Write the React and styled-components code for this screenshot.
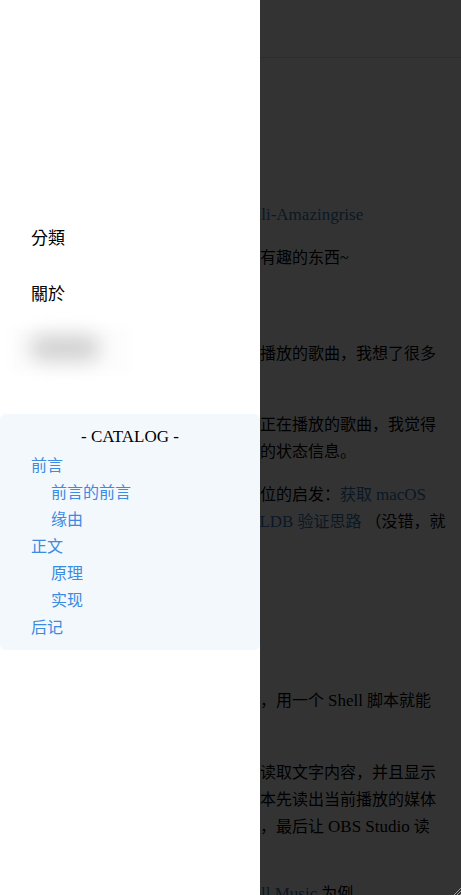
import styled, { createGlobalStyle } from "styled-components";

const GlobalStyle = createGlobalStyle`
  html, body {
    margin: 0;
    padding: 0;
    background: #fff;
    overflow: hidden;
  }
  body {
    font-family: "Liberation Serif", "Noto Sans CJK SC", serif;
  }
`;

const Page = styled.div`
  position: relative;
  width: 461px;
  height: 895px;
  overflow: hidden;
  background: #fff;
`;

const NavBar = styled.div`
  height: 57px;
  background: #fff;
  border-bottom: 1px solid #e2e2e2;
`;

const Article = styled.div`
  padding-left: 244px;
  padding-top: 143px;
  font-size: 16px;
  line-height: 27px;
  color: #000;
  font-family: "Liberation Serif", "Noto Sans CJK SC", serif;
`;

const Line = styled.div`
  white-space: nowrap;
  margin-top: ${(p) => p.$gap || 0}px;
  margin-left: ${(p) => p.$shift || 0}px;
`;

const Latin = styled.span`
  font-family: "Liberation Serif", serif;
  font-size: 17px;
`;

const A = styled.span`
  color: #337ab7;
`;

const Overlay = styled.div`
  position: absolute;
  inset: 0;
  background: rgba(0, 0, 0, 0.8);
`;

const Grip = styled.svg`
  position: absolute;
  right: 0;
  bottom: 0;
`;

const Sidebar = styled.aside`
  position: absolute;
  top: 0;
  left: 0;
  bottom: 0;
  width: 260px;
  background: #fff;
  padding-top: 209px;
  box-sizing: border-box;
`;

const NavItem = styled.div`
  padding-left: 31px;
  font-size: 17px;
  line-height: 56px;
  color: #000;
  font-family: "Noto Sans CJK TC", sans-serif;
`;

const BlurWrap = styled.div`
  height: 54px;
  position: relative;
  margin-left: 10px;
  width: 120px;
`;

const Haze = styled.div`
  position: absolute;
  inset: 6px 0 2px 0;
  background: rgba(0, 0, 0, 0.007);
  filter: blur(4px);
`;

const Blob = styled.div`
  position: absolute;
  left: 20px;
  top: 15px;
  width: 70px;
  height: 24px;
  border-radius: 12px;
  background: #cdcdcd;
  filter: blur(10px);
`;

const Catalog = styled.div`
  margin-top: 39px;
  background: #f3f8fc;
  border-radius: 6px;
  padding: 12px 0 10px;
`;

const CatalogTitle = styled.div`
  text-align: center;
  font-size: 17px;
  line-height: 22px;
  margin-bottom: 3px;
  color: #000;
  font-family: "Liberation Serif", serif;
`;

const CatalogItem = styled.div`
  padding-left: ${(p) => (p.$sub ? 51 : 31)}px;
  font-size: 16px;
  line-height: 27px;
  color: #3d8ae2;
  font-family: "Noto Sans CJK SC", sans-serif;
`;

const catalog = [
  { t: "前言" },
  { t: "前言的前言", sub: true },
  { t: "缘由", sub: true },
  { t: "正文" },
  { t: "原理", sub: true },
  { t: "实现", sub: true },
  { t: "后记" },
];

export default function App() {
  return (
    <Page>
      <GlobalStyle />
      <NavBar />
      <Article>
        <Line $shift={4}>
          <A>
            <Latin>bili-Amazingrise</Latin>
          </A>
        </Line>
        <Line $gap={16}>有有趣的东西~</Line>
        <Line $gap={69}>正播放的歌曲，我想了很多</Line>
        <Line $gap={44}>示正在播放的歌曲，我觉得</Line>
        <Line>体的状态信息。</Line>
        <Line $gap={16}>
          单位的启发：<A>获取 <Latin>macOS</Latin></A>
        </Line>
        <Line $shift={5}>
          <A>
            <Latin>LLDB</Latin> 验证思路
          </A>{" "}
          （没错，就
        </Line>
        <Line $gap={152}>
          单，用一个 <Latin>Shell</Latin> 脚本就能
        </Line>
        <Line $gap={45}>，读取文字内容，并且显示</Line>
        <Line>脚本先读出当前播放的媒体</Line>
        <Line>
          中，最后让 <Latin>OBS Studio</Latin> 读
        </Line>
        <Line $gap={40}>
          <A>
            <Latin>ppll Music</Latin>
          </A>{" "}
          为例
        </Line>
      </Article>
      <Overlay />
      <Grip width="8" height="8" viewBox="0 0 8 8">
        <path d="M8 1 L1 8 M8 4 L4 8 M8 7 L7 8" stroke="#9a9a9a" strokeWidth="1" />
      </Grip>
      <Sidebar>
        <NavItem>分類</NavItem>
        <NavItem>關於</NavItem>
        <BlurWrap>
          <Haze />
          <Blob />
        </BlurWrap>
        <Catalog>
          <CatalogTitle>- CATALOG -</CatalogTitle>
          {catalog.map((c) => (
            <CatalogItem key={c.t} $sub={c.sub}>
              {c.t}
            </CatalogItem>
          ))}
        </Catalog>
      </Sidebar>
    </Page>
  );
}
